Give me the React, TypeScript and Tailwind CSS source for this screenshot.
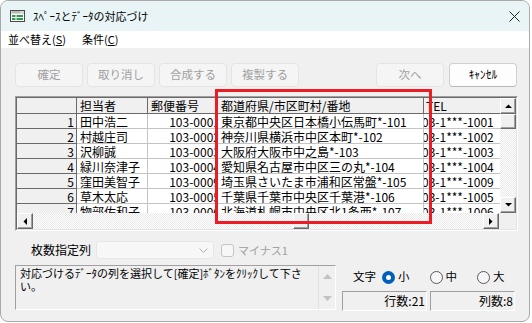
const rows = [
  ['1', '田中浩二', '103-0001', '東京都中央区日本橋小伝馬町*-101', '03-1***-1001'],
  ['2', '村越庄司', '103-0002', '神奈川県横浜市中区本町*-102', '03-1***-1002'],
  ['3', '沢柳誠', '103-0003', '大阪府大阪市中之島*-103', '03-1***-1003'],
  ['4', '緑川奈津子', '103-0004', '愛知県名古屋市中区三の丸*-104', '03-1***-1004'],
  ['5', '窪田美智子', '103-0009', '埼玉県さいたま市浦和区常盤*-105', '03-1***-1009'],
  ['6', '草木太応', '103-0005', '千葉県千葉市中央区千葉港*-106', '03-1***-1005'],
  ['7', '物部佐和子', '103-0006', '北海道札幌市中央区北1条西*-107', '03-1***-1006'],
];

function Arrow({ dir }: { dir: 'up' | 'down' | 'left' | 'right' }) {
  const pts = {
    up: '0,4 7,4 3.5,0.5',
    down: '0,0 7,0 3.5,3.5',
    left: '4,0 4,7 0.5,3.5',
    right: '0,0 0,7 3.5,3.5',
  }[dir];
  const vertical = dir === 'up' || dir === 'down';
  return (
    <div className="w-[16px] h-[16px] shrink-0 bg-[#f0f0f0] border border-t-white border-l-white border-r-[#696969] border-b-[#696969] shadow-[inset_-1px_-1px_#a0a0a0] flex items-center justify-center">
      <svg width={vertical ? 7 : 4} height={vertical ? 4 : 7}>
        <polygon points={pts} fill="#000" />
      </svg>
    </div>
  );
}

function Thumb({ className }: { className: string }) {
  return (
    <div
      className={`shrink-0 bg-[#f0f0f0] border border-t-white border-l-white border-r-[#696969] border-b-[#696969] shadow-[inset_-1px_-1px_#a0a0a0] ${className}`}
    />
  );
}

const track = 'bg-[image:repeating-conic-gradient(#ffffff_0%_25%,#e9e9e9_0%_50%)] bg-size-[2px_2px]';

function Button({ label, active }: { label: string; active?: boolean }) {
  return (
    <div
      className={`w-[68px] h-[24px] rounded-[4px] border flex items-center justify-center text-[11.5px] ${
        active
          ? 'bg-[#fdfdfd] border-[#d0d0d0] border-b-[#b8b8b8] text-black'
          : 'bg-[#f5f5f5] border-[#e4e4e4] text-[#a0a0a0]'
      }`}
    >
      {label}
    </div>
  );
}

function Radio({ on, label }: { on?: boolean; label: string }) {
  return (
    <div className="flex items-center gap-[3px]">
      {on ? (
        <div className="w-[13px] h-[13px] rounded-full bg-[#005fb8] flex items-center justify-center">
          <div className="w-[5px] h-[5px] rounded-full bg-white" />
        </div>
      ) : (
        <div className="w-[13px] h-[13px] rounded-full border border-[#5a5a5a] bg-[#f7f7f7]" />
      )}
      <span>{label}</span>
    </div>
  );
}

const fixedCell = 'bg-[#f0f0f0] border-r border-b border-[#6a6a6a]';
const dataCell = 'bg-white border-r border-b border-[#c4c4c4]';

export default function App() {
  return (
    <div className="w-[532px] h-[323px] bg-white font-['Noto_Sans_CJK_JP','Noto_Sans',sans-serif] text-black">
      <div className="relative w-[530px] h-[322px] rounded-[8px] border border-[#a9a9a9] overflow-hidden flex flex-col bg-[#f0f0f0]">
        {/* title bar */}
        <div className="h-[30px] bg-[#e8f4f6] flex items-center pl-[9px] shrink-0">
          <svg width="15" height="12" viewBox="0 0 15 12">
            <rect x="0.5" y="0.5" width="14" height="11" fill="#fff" stroke="#4a4a4a" />
            <rect x="1" y="1" width="13" height="3" fill="#d8d8d8" />
            <rect x="2" y="5" width="11" height="2" fill="#2f9c4b" />
            <rect x="2" y="8" width="11" height="2" fill="#2f9c4b" />
            <line x1="6" y1="5" x2="6" y2="10" stroke="#fff" />
            <line x1="2" y1="2" x2="10" y2="2" stroke="#9a9a9a" />
          </svg>
          <span className="ml-[8px] text-[11px] leading-none">ｽﾍﾟｰｽとﾃﾞｰﾀの対応づけ</span>
          <div className="flex-1" />
          <svg width="11" height="11" className="mr-[9px]">
            <line x1="0.5" y1="0.5" x2="10.5" y2="10.5" stroke="#222" />
            <line x1="10.5" y1="0.5" x2="0.5" y2="10.5" stroke="#222" />
          </svg>
        </div>

        {/* menu */}
        <div className="h-[17px] bg-white flex items-center text-[11px] leading-none shrink-0">
          <span className="ml-[7px]">
            並べ替え(<span className="underline">S</span>)
          </span>
          <span className="ml-[16px]">
            条件(<span className="underline">C</span>)
          </span>
        </div>

        {/* body */}
        <div className="flex-1 pl-[14px] pt-[15px] flex flex-col">
          <div className="flex">
            <div className="flex gap-[4px]">
              <Button label="確定" />
              <Button label="取り消し" />
              <Button label="合成する" />
              <Button label="複製する" />
            </div>
            <div className="flex gap-[5px] ml-[77px]">
              <Button label="次へ" />
              <Button label="ｷｬﾝｾﾙ" active />
            </div>
          </div>

          {/* grid */}
          <div className="mt-[9px] w-[503px] h-[135px] border border-t-[#a0a0a0] border-l-[#a0a0a0] border-r-white border-b-white">
            <div className="w-full h-full border border-t-[#696969] border-l-[#696969] border-r-[#e3e3e3] border-b-[#e3e3e3] flex flex-col">
              <div className="flex h-[115px]">
                <div className="flex-1 overflow-hidden text-[12px] leading-[15px]">
                  <div className="flex h-[16px] w-[600px]">
                    <div className={`w-[60px] shrink-0 ${fixedCell}`} />
                    <div className={`w-[71px] shrink-0 pl-[3px] ${fixedCell}`}>担当者</div>
                    <div className={`w-[69px] shrink-0 pl-[3px] ${fixedCell}`}>郵便番号</div>
                    <div className={`w-[207px] shrink-0 pl-[4px] ${fixedCell}`}>都道府県/市区町村/番地</div>
                    <div className={`w-[90px] shrink-0 pl-[2px] ${fixedCell}`}>TEL</div>
                  </div>
                  {rows.map((r) => (
                    <div key={r[0]} className="flex h-[15px] w-[600px]">
                      <div className={`w-[60px] shrink-0 text-right pr-[2px] ${fixedCell}`}>{r[0]}</div>
                      <div className={`w-[71px] shrink-0 pl-[3px] whitespace-nowrap overflow-hidden ${dataCell}`}>{r[1]}</div>
                      <div className={`w-[69px] shrink-0 flex justify-end overflow-hidden ${dataCell}`}>
                        <span className="shrink-0 mr-[-4px] whitespace-nowrap">{r[2]}</span>
                      </div>
                      <div className={`w-[207px] shrink-0 pl-[4px] whitespace-nowrap overflow-hidden ${dataCell}`}>{r[3]}</div>
                      <div className={`w-[90px] shrink-0 overflow-hidden whitespace-nowrap ${dataCell}`}>
                        <span className="ml-[-2px]">{r[4]}</span>
                      </div>
                    </div>
                  ))}
                </div>
                <div className="w-[16px] flex flex-col">
                  <Arrow dir="up" />
                  <Thumb className="h-[15px]" />
                  <div className={`flex-1 ${track}`} />
                  <Arrow dir="down" />
                </div>
              </div>
              <div className="flex h-[16px]">
                <div className="flex-1 flex">
                  <Arrow dir="left" />
                  <div className={`w-[260px] ${track}`} />
                  <Thumb className="w-[16px]" />
                  <div className={`flex-1 ${track}`} />
                  <Arrow dir="right" />
                </div>
                <div className="w-[17px] bg-[#f0f0f0]" />
              </div>
            </div>
          </div>

          {/* options row */}
          <div className="mt-[10px] flex items-center h-[18px]">
            <span className="w-[76px] text-right text-[12px]">枚数指定列</span>
            <div className="ml-[5px] w-[118px] h-[18px] bg-[#f7f7f7] border border-[#e6e6e6] rounded-[3px] flex items-center justify-end pr-[5px]">
              <svg width="9" height="5">
                <polyline points="0.5,0.5 4.5,4.5 8.5,0.5" fill="none" stroke="#b0b0b0" />
              </svg>
            </div>
            <div className="ml-[7px] w-[13px] h-[13px] rounded-[3px] border border-[#c4c4c4] bg-[#f7f7f7]" />
            <span className="ml-[4px] text-[11px] text-[#a0a0a0]">マイナス1</span>
          </div>

          {/* bottom area */}
          <div className="mt-[6px] flex">
            <div className="w-[321px] h-[45px] border border-t-[#a0a0a0] border-l-[#a0a0a0] border-r-white border-b-white flex">
              <div className="flex-1 pl-[4px] pt-[1px] text-[11px] leading-[13px] whitespace-nowrap overflow-hidden">
                対応づけるﾃﾞｰﾀの列を選択して[確定]ﾎﾞﾀﾝをｸﾘｯｸして下さ
                <br />
                い。
              </div>
              <div className="w-[17px] flex flex-col items-center justify-between py-[8px] border-l border-[#e0e0e0]">
                <svg width="9" height="5">
                  <polygon points="0,5 9,5 4.5,0" fill="#c2c2c2" />
                </svg>
                <svg width="9" height="5">
                  <polygon points="0,0 9,0 4.5,5" fill="#c2c2c2" />
                </svg>
              </div>
            </div>
            <div className="ml-[6px] flex flex-col text-[11.5px]">
              <div className="flex items-center h-[14px] mt-[5px] pl-[11px]">
                <span>文字</span>
                <div className="ml-[6px] flex gap-[20px]">
                  <Radio on label="小" />
                  <Radio label="中" />
                  <Radio label="大" />
                </div>
              </div>
              <div className="mt-[7px] flex gap-[3px] text-[12px]">
                <div className="w-[85px] h-[20px] border border-t-[#a0a0a0] border-l-[#a0a0a0] border-r-white border-b-white text-right pr-[1px] leading-[18px]">
                  行数:21
                </div>
                <div className="w-[85px] h-[20px] border border-t-[#a0a0a0] border-l-[#a0a0a0] border-r-white border-b-white text-right pr-[1px] leading-[18px]">
                  列数:8
                </div>
              </div>
            </div>
          </div>
        </div>

        {/* highlight */}
        <div className="absolute left-[214px] top-[88px] w-[217px] h-[135px] border-[3px] border-[#ec1c24]" />
      </div>
    </div>
  );
}
